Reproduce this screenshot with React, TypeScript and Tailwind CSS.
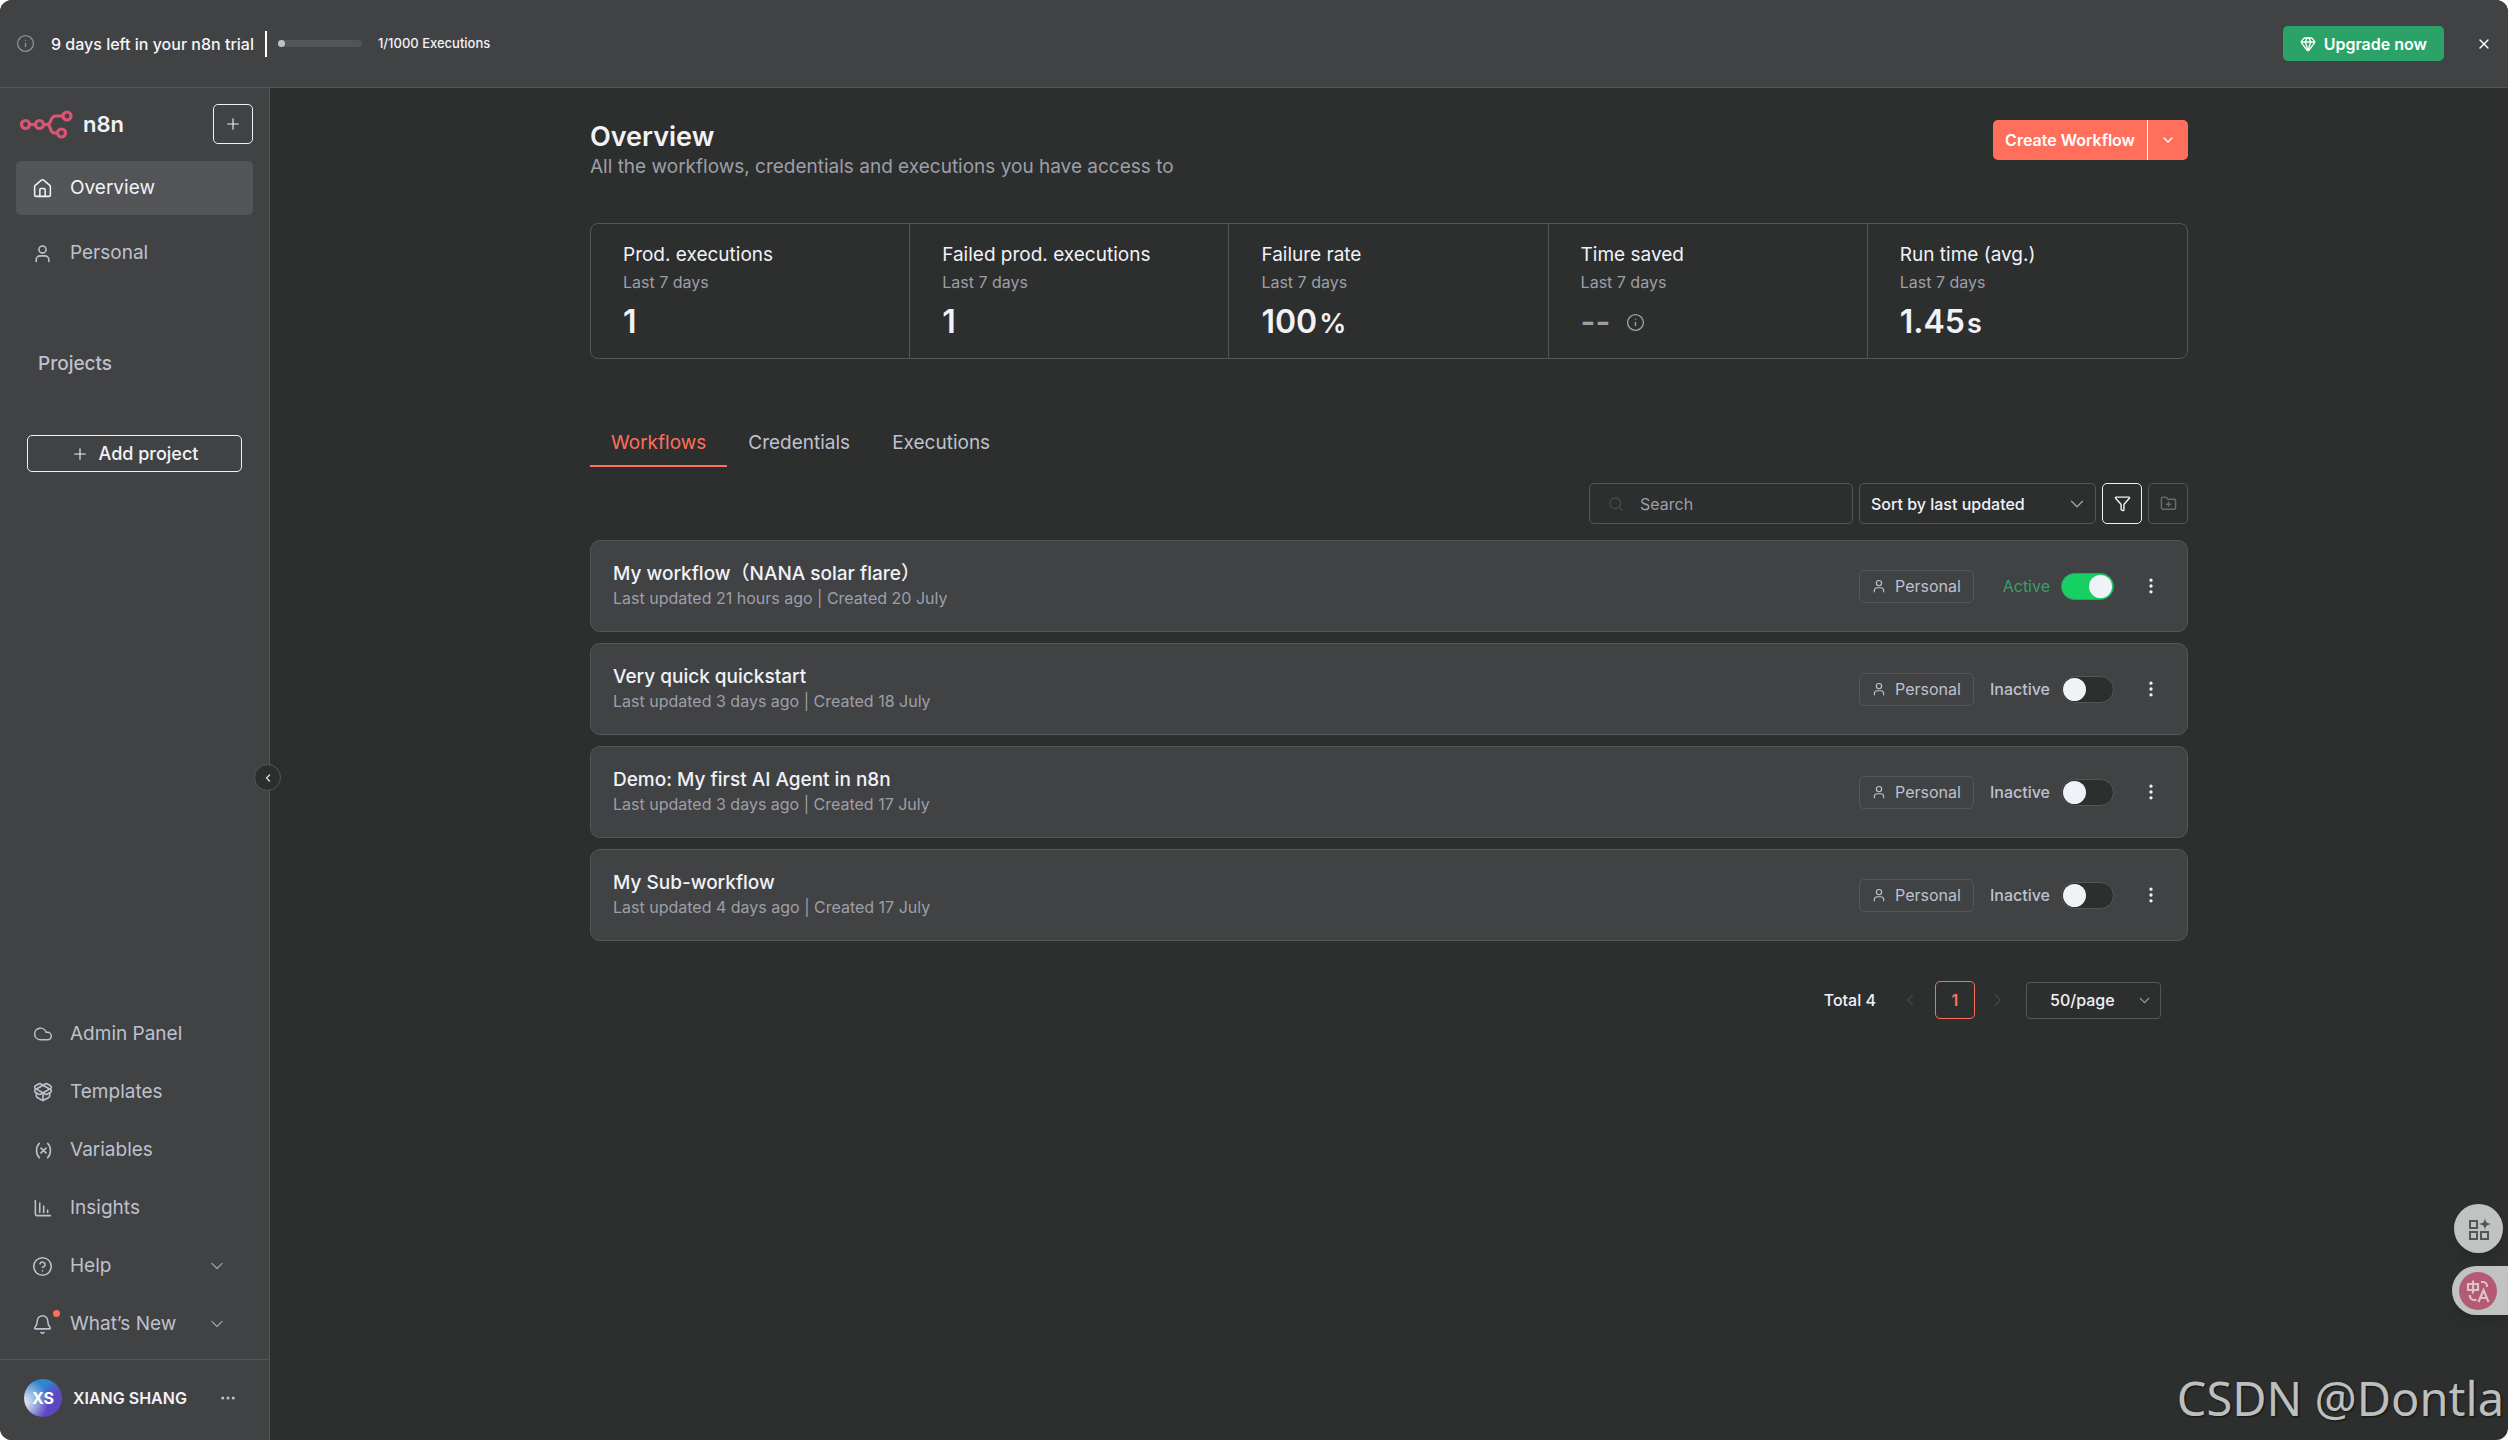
import React, { useState } from "react";
import {
  Bell,
  ChevronDown,
  ChevronLeft,
  ChevronRight,
  CircleQuestionMark,
  Cloud,
  Ellipsis,
  EllipsisVertical,
  FolderPlus,
  Funnel,
  Gem,
  House,
  Info,
  Plus,
  Search,
  X,
} from "lucide-react";

type IconProps = { className?: string };

const svgBase = {
  viewBox: "0 0 24 24",
  fill: "none",
  stroke: "currentColor",
  strokeLinecap: "round" as const,
  strokeLinejoin: "round" as const,
  "aria-hidden": true,
};

function PersonIcon({ className }: IconProps) {
  return (
    <svg {...svgBase} strokeWidth={2} className={className}>
      <circle cx="12" cy="7" r="4.5" />
      <path d="M4 22v-2a5 5 0 0 1 5-5h6a5 5 0 0 1 5 5v2" />
    </svg>
  );
}

function OpenBoxIcon({ className }: IconProps) {
  return (
    <svg {...svgBase} strokeWidth={2} className={className}>
      <path d="M12 22v-9" />
      <path d="M15.17 2.21a1.67 1.67 0 0 1 1.63 0L21 4.57a1.93 1.93 0 0 1 0 3.36L8.82 14.79a1.655 1.655 0 0 1-1.64 0L3 12.43a1.93 1.93 0 0 1 0-3.36z" />
      <path d="M20 13v3.87a2.06 2.06 0 0 1-1.11 1.83l-6 3.08a1.93 1.93 0 0 1-1.78 0l-6-3.08A2.06 2.06 0 0 1 4 16.87V13" />
      <path d="M21 12.43a1.93 1.93 0 0 0 0-3.36L8.83 2.2a1.64 1.64 0 0 0-1.63 0L3 4.57a1.93 1.93 0 0 0 0 3.36l12.18 6.86a1.636 1.636 0 0 0 1.63 0z" />
    </svg>
  );
}

function VariableIcon({ className }: IconProps) {
  return (
    <svg {...svgBase} strokeWidth={2} className={className}>
      <path d="M8 3S4.5 6 4.5 12 8 21 8 21M18.500 3S22 6 22 12s-3.500 9-3.500 9" />
      <path d="m10 9 6.500 6M16.500 9 10 15" />
    </svg>
  );
}

function InsightsIcon({ className }: IconProps) {
  return (
    <svg {...svgBase} strokeWidth={2} className={className}>
      <path d="M3 2v17a2 2 0 0 0 2 2h17" />
      <path d="M8.500 5v12M13.500 9v8M18.500 14v3" />
    </svg>
  );
}

function N8nLogo() {
  return (
    <svg viewBox="0 0 53 29" fill="none" stroke="#db5474" strokeWidth="3.2" className="h-[29px] w-[53px]" aria-hidden="true">
      <circle cx="5.500" cy="14.500" r="4" />
      <circle cx="19.500" cy="14.500" r="4" />
      <circle cx="47" cy="6" r="4" />
      <circle cx="41.500" cy="23" r="4" />
      <path d="M9.500 14.500h6M23.500 14.500H27c5.500 0 2-8.500 9-8.500h7M27 14.500c5 0 1.500 8.500 7.500 8.500h3" />
    </svg>
  );
}

function GridSparkIcon() {
  return (
    <svg viewBox="0 0 24 24" fill="none" stroke="#555756" strokeWidth="2" className="size-6" aria-hidden="true">
      <path d="M3 4h7v7H3zM3 15h7v7H3zM14 15h7v7h-7z" />
      <path d="M18 1c.7 4 1.500 5 6 6-4.500 1-5.300 2-6 6-.7-4-1.500-5-6-6 4.500-1 5.300-2 6-6z" fill="#555756" stroke="none" />
    </svg>
  );
}

function TranslateIcon() {
  return (
    <svg viewBox="0 0 24 24" fill="none" stroke="#dcc3ca" strokeWidth="2.2" className="size-6" aria-hidden="true">
      <path d="M2 5h10v6H2zM7 1.500v13" />
      <path d="M15 3h2a4 4 0 0 1 4 4v1M4 16v1a4 4 0 0 0 4 4h2.500" />
      <path d="M12.500 23 17.500 11 22.500 23M14.500 19h6" />
    </svg>
  );
}

const mainNav = [
  { label: "Overview", icon: <House className="size-[21px]" strokeWidth={1.75} />, active: true },
  { label: "Personal", icon: <PersonIcon className="size-[19px]" />, active: false },
];

const footNav = [
  { label: "Admin Panel", icon: <Cloud className="size-5" strokeWidth={1.75} /> },
  { label: "Templates", icon: <OpenBoxIcon className="size-5" /> },
  { label: "Variables", icon: <VariableIcon className="size-[19px]" /> },
  { label: "Insights", icon: <InsightsIcon className="size-[19px]" /> },
  { label: "Help", icon: <CircleQuestionMark className="size-[21px]" strokeWidth={1.75} />, more: true },
  { label: "What’s New", icon: <Bell className="size-[21px]" strokeWidth={1.75} />, more: true, dot: true },
];

const stats = [
  { label: "Prod. executions", value: "1" },
  { label: "Failed prod. executions", value: "1" },
  { label: "Failure rate", value: "100", unit: "%" },
  { label: "Time saved", empty: true },
  { label: "Run time (avg.)", value: "1.45", unit: "s" },
];

const workflows = [
  { name: "My workflow（NANA solar flare）", updated: "21 hours ago", created: "20 July", active: true },
  { name: "Very quick quickstart", updated: "3 days ago", created: "18 July", active: false },
  { name: "Demo: My first AI Agent in n8n", updated: "3 days ago", created: "17 July", active: false },
  { name: "My Sub-workflow", updated: "4 days ago", created: "17 July", active: false },
];

function Banner() {
  return (
    <header className="flex h-[88px] shrink-0 items-center border-b border-[#555658] bg-[#414244] pr-4 pl-4">
      <Info className="size-[19px] text-[#8d8f94]" strokeWidth={1.75} />
      <span className="ml-4 text-base font-medium text-[#f4f5f9]">9 days left in your n8n trial</span>
      <span className="ml-[11px] h-[26px] w-[2px] bg-white" />
      <div role="progressbar" aria-label="Executions used" aria-valuenow={1} aria-valuemin={0} aria-valuemax={1000} className="ml-[11px] h-[7px] w-[84px] rounded-full bg-[#525456]">
        <div className="h-full w-[7px] rounded-full bg-[#bec1cd]" />
      </div>
      <span className="ml-4 text-[13px] font-medium text-[#f1f2f7]">1/1000 Executions</span>
      <button type="button" className="ml-auto flex h-[35px] items-center gap-2 rounded-[5px] bg-[#2ba368] px-[17px] text-base font-semibold text-white">
        <Gem className="size-4" strokeWidth={2} />
        Upgrade now
      </button>
      <button type="button" aria-label="Dismiss" className="ml-8 text-white">
        <X className="size-4" strokeWidth={2} />
      </button>
    </header>
  );
}

function Sidebar() {
  return (
    <aside className="relative flex w-[270px] shrink-0 flex-col border-r border-[#555658] bg-[#414244] text-[19px] text-[#bec1cd]">
      <div className="flex items-center pt-4 pr-4 pl-5">
        <N8nLogo />
        <span className="ml-[10px] text-[22px] font-semibold text-[#f1f2f7]">n8n</span>
        <button type="button" aria-label="Add" className="ml-auto flex size-10 items-center justify-center rounded-[5px] border border-[#f1f2f7] text-[#f1f2f7]">
          <Plus className="size-[18px]" strokeWidth={1.5} />
        </button>
      </div>
      <nav aria-label="Main" className="mt-[17px] flex flex-col gap-[11px] px-4">
        {mainNav.map((item) => (
          <a
            key={item.label}
            href="#"
            className={
              item.active
                ? "flex h-[54px] items-center gap-[17px] rounded-[5px] bg-[#525456] pl-4 text-[#f1f2f7]"
                : "flex h-[54px] items-center gap-[17px] rounded-[5px] pl-4"
            }
          >
            <span className="flex w-[21px] justify-center">{item.icon}</span>
            {item.label}
          </a>
        ))}
      </nav>
      <h2 className="mt-[72px] pl-[38px] leading-6 font-medium">Projects</h2>
      <button type="button" className="mt-[59px] mr-[27px] ml-[27px] flex h-[37px] items-center justify-center gap-[10px] rounded-[5px] border border-[#f1f2f7] text-lg font-medium text-[#f1f2f7]">
        <Plus className="size-[18px]" strokeWidth={1.5} />
        Add project
      </button>
      <nav aria-label="More" className="mt-auto flex flex-col gap-1 px-4 pb-2">
        {footNav.map((item) => (
          <a key={item.label} href="#" className="flex h-[54px] items-center gap-[17px] pr-[26px] pl-4">
            <span className="relative flex w-[21px] justify-center">
              {item.icon}
              {item.dot && <span className="absolute -top-1 -right-[7px] size-[7px] rounded-full bg-[#ff6f5c]" />}
            </span>
            {item.label}
            {item.more && <ChevronDown className="ml-auto size-5 text-[#9a9ca6]" strokeWidth={1.5} />}
          </a>
        ))}
      </nav>
      <div className="flex h-[81px] items-center border-t border-[#555658] pr-8 pb-1 pl-6">
        <span className="flex size-[38px] items-center justify-center rounded-full bg-[radial-gradient(circle_at_0%_60%,#d5dbee_8%,transparent_55%),linear-gradient(135deg,#2f86cf_35%,#5c48c2_62%)] text-base font-bold text-white">
          XS
        </span>
        <span className="ml-[11px] text-base font-semibold text-[#f1f2f7]">XIANG SHANG</span>
        <button type="button" aria-label="User menu" className="ml-auto">
          <Ellipsis className="size-[18px]" strokeWidth={2} />
        </button>
      </div>
      <button type="button" aria-label="Collapse sidebar" className="absolute top-[50%] -right-3 z-10 flex size-[27px] items-center justify-center rounded-full border border-[#555658] bg-[#2d2e2e] text-[#d0d3dc]">
        <ChevronLeft className="size-3" strokeWidth={3} />
      </button>
    </aside>
  );
}

function PageHeader() {
  return (
    <div className="flex items-start justify-between">
      <div>
        <h1 className="text-[27px] leading-[34px] font-semibold text-[#f1f2f7]">Overview</h1>
        <p className="text-[19px] leading-[26px] text-[#9d9fa8]">All the workflows, credentials and executions you have access to</p>
      </div>
      <div className="flex h-10 overflow-hidden rounded-[5px] bg-[#ff6f5c] text-white">
        <button type="button" className="px-3 text-base font-semibold">Create Workflow</button>
        <button type="button" aria-label="More create options" className="flex w-[41px] items-center justify-center border-l border-white">
          <ChevronDown className="size-4" strokeWidth={2} />
        </button>
      </div>
    </div>
  );
}

function Stats() {
  return (
    <ul className="mt-[43px] grid grid-cols-5 divide-x divide-[#555658] rounded-lg border border-[#555658]">
      {stats.map((s) => (
        <li key={s.label} className="pt-[17px] pb-4 pl-8">
          <p className="text-[19px] leading-7 text-[#f1f2f7]">{s.label}</p>
          <p className="text-base leading-[26px] text-[#9d9fa8]">Last 7 days</p>
          {s.empty ? (
            <p className="mt-[7px] flex h-10 items-center gap-4 text-[32px] font-semibold text-[#9d9fa8]">
              --
              <Info className="size-[19px]" strokeWidth={1.75} />
            </p>
          ) : (
            <p className="mt-[7px] flex h-10 items-baseline gap-[2px] text-[32px] leading-10 font-semibold text-[#f1f2f7]">
              {s.value}
              {s.unit && <span className="text-[27px] leading-none">{s.unit}</span>}
            </p>
          )}
        </li>
      ))}
    </ul>
  );
}

function Tabs() {
  return (
    <nav aria-label="Sections" className="mt-16 flex text-[19px] leading-10 text-[#bec1cd]">
      <a href="#" aria-current="page" className="border-b-2 border-[#ff6f5c] px-[21px] pb-[2px] text-[#ff6f5c]">Workflows</a>
      <a href="#" className="px-[21px]">Credentials</a>
      <a href="#" className="px-[21px]">Executions</a>
    </nav>
  );
}

function Toolbar() {
  return (
    <div className="mt-4 flex h-[41px] justify-end gap-[6px] text-base">
      <label className="flex w-[264px] items-center rounded-[5px] border border-[#555658] pl-[18px]">
        <Search className="size-4 shrink-0 text-[#494a4c]" strokeWidth={2} />
        <input type="search" aria-label="Search" placeholder="Search" className="ml-4 w-full min-w-0 bg-transparent text-base text-[#f1f2f7] outline-none placeholder:text-[#9d9fa8]" />
      </label>
      <div className="relative w-[237px]">
        <select aria-label="Sort" className="h-full w-full appearance-none rounded-[5px] border border-[#555658] bg-transparent pl-[11px] font-medium text-[#f1f2f7]">
          <option>Sort by last updated</option>
        </select>
        <ChevronDown className="pointer-events-none absolute top-[10px] right-2 size-[22px] text-[#9d9fa8]" strokeWidth={1.5} />
      </div>
      <button type="button" aria-label="Filters" className="flex w-10 items-center justify-center rounded-[5px] border border-[#f1f2f7] text-[#f1f2f7]">
        <Funnel className="size-[17px]" strokeWidth={2} />
      </button>
      <button type="button" aria-label="Add folder" disabled className="flex w-10 items-center justify-center rounded-[5px] border border-[#555658] text-[#696b6e]">
        <FolderPlus className="size-[17px]" strokeWidth={2} />
      </button>
    </div>
  );
}

function WorkflowCard({ name, updated, created, active }: (typeof workflows)[number]) {
  const [on, setOn] = useState(active);
  return (
    <li className="flex h-[92px] items-center rounded-[10px] border border-[#555658] bg-[#414244] pr-[26px] pl-[22px]">
      <div>
        <h2 className="text-[19px] leading-6 font-medium text-[#f1f2f7]">{name}</h2>
        <p className="text-base leading-6 text-[#9d9fa8]">
          Last updated {updated} | Created {created}
        </p>
      </div>
      <span className="ml-auto flex h-[33px] w-[115px] items-center justify-center gap-[9px] rounded-[5px] border border-[#555658] text-base text-[#bec1cd]">
        <PersonIcon className="size-[14px]" />
        Personal
      </span>
      <label className="flex w-[140px] items-center justify-end gap-[11px] text-base">
        <span className={on ? "text-[#36a06a]" : "font-medium text-[#bec1cd]"}>{on ? "Active" : "Inactive"}</span>
        <span className="relative flex">
          <input
            type="checkbox"
            role="switch"
            checked={on}
            onChange={(e) => setOn(e.target.checked)}
            className="peer h-[27px] w-[53px] appearance-none rounded-full border border-[#555658] bg-[#2d2e2e] checked:border-[#2ba368] checked:bg-[#16d064]"
          />
          <span className="pointer-events-none absolute top-[2px] left-[2px] size-[23px] rounded-full bg-[#f1f2f7] peer-checked:left-[28px]" />
        </span>
      </label>
      <button type="button" aria-label="Workflow actions" className="ml-[27px] text-[#f1f2f7]">
        <EllipsisVertical className="size-[20px]" strokeWidth={2} />
      </button>
    </li>
  );
}

function Pagination() {
  return (
    <div className="mt-10 flex h-[38px] items-center justify-end pr-[27px] text-base font-medium text-[#f1f2f7]">
      <span>Total 4</span>
      <button type="button" aria-label="Previous page" disabled className="ml-6 text-[#454648]">
        <ChevronLeft className="size-5" strokeWidth={1.5} />
      </button>
      <button type="button" aria-current="page" className="ml-[15px] h-full w-10 rounded-[5px] border border-[#ff6f5c] font-semibold text-[#ff6f5c]">1</button>
      <button type="button" aria-label="Next page" disabled className="ml-[13px] text-[#454648]">
        <ChevronRight className="size-5" strokeWidth={1.5} />
      </button>
      <div className="relative ml-[18px] h-[37px] w-[135px]">
        <select aria-label="Page size" className="h-full w-full appearance-none rounded-[4px] border border-[#555658] bg-transparent pl-[23px]">
          <option>50/page</option>
        </select>
        <ChevronDown className="pointer-events-none absolute top-[10px] right-2 size-[17px] text-[#9d9fa8]" strokeWidth={1.75} />
      </div>
    </div>
  );
}

export default function App() {
  return (
    <div className="min-h-screen bg-white font-['Inter','Noto_Sans_CJK_SC',sans-serif]">
      <div className="relative flex min-h-screen flex-col overflow-hidden rounded-xl bg-[#2d2e2e]">
        <Banner />
        <div className="flex flex-1">
          <Sidebar />
          <main className="flex-1 px-6 pt-8">
            <div className="mx-auto max-w-[1598px]">
              <PageHeader />
              <Stats />
              <Tabs />
              <Toolbar />
              <ul className="mt-4 flex flex-col gap-[11px]">
                {workflows.map((w) => (
                  <WorkflowCard key={w.name} {...w} />
                ))}
              </ul>
              <Pagination />
            </div>
          </main>
        </div>
        <div className="absolute right-0 bottom-[125px] flex flex-col items-end gap-[13px]">
          <button type="button" aria-label="Quick tools" className="mr-[5px] flex size-[49px] items-center justify-center rounded-full bg-[#c1c3c2] shadow-lg">
            <GridSparkIcon />
          </button>
          <button type="button" aria-label="Translate page" className="flex h-[49px] w-14 items-center rounded-l-full bg-[#c1c3c2] pl-[7px] shadow-lg">
            <span className="flex size-[38px] items-center justify-center rounded-full bg-[#b55a75]">
              <TranslateIcon />
            </span>
          </button>
        </div>
        <p className="absolute right-1 bottom-[10px] font-['Noto_Sans',sans-serif] text-[47px] leading-[64px] text-[#bdbebe] [text-shadow:1px_1px_2px_#111]">
          CSDN @Dontla
        </p>
      </div>
    </div>
  );
}
